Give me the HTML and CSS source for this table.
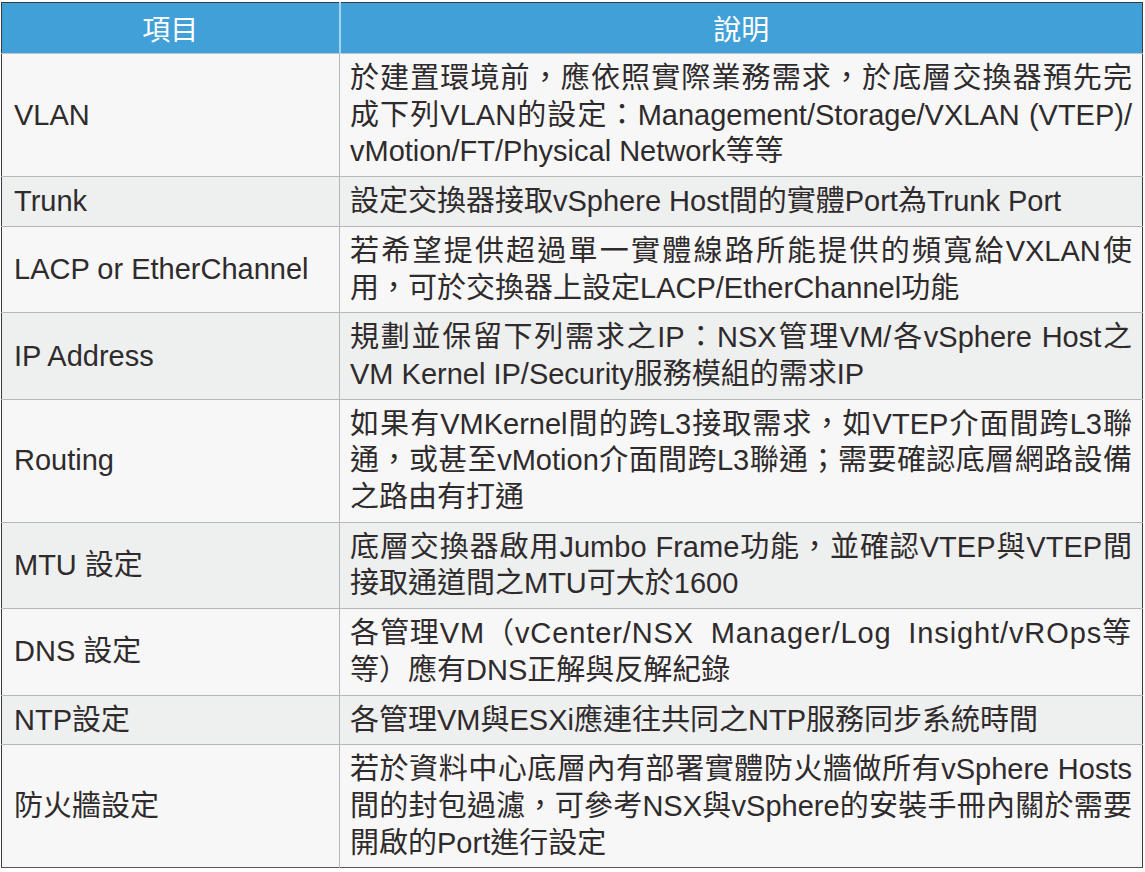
FILE: index.html
```html
<!DOCTYPE html>
<html lang="zh-Hant">
<head>
<meta charset="utf-8">
<title>項目說明</title>
<link rel="stylesheet" href="styles.css">
</head>
<body>
<table class="spec">
  <colgroup><col class="c1"><col class="c2"></colgroup>
  <thead>
    <tr><th>項目</th><th>說明</th></tr>
  </thead>
  <tbody>
    <tr class="odd">
      <td class="k">VLAN</td>
      <td class="v"><span class="ln j">於建置環境前，應依照實際業務需求，於底層交換器預先完</span><span class="ln j">成下列VLAN的設定：Management/Storage/VXLAN (VTEP)/</span><span class="ln">vMotion/FT/Physical Network等等</span></td>
    </tr>
    <tr class="even">
      <td class="k">Trunk</td>
      <td class="v"><span class="ln">設定交換器接取vSphere Host間的實體Port為Trunk Port</span></td>
    </tr>
    <tr class="odd">
      <td class="k">LACP or EtherChannel</td>
      <td class="v"><span class="ln j">若希望提供超過單一實體線路所能提供的頻寬給VXLAN使</span><span class="ln">用，可於交換器上設定LACP/EtherChannel功能</span></td>
    </tr>
    <tr class="even">
      <td class="k">IP Address</td>
      <td class="v"><span class="ln j">規劃並保留下列需求之IP：NSX管理VM/各vSphere Host之</span><span class="ln">VM Kernel IP/Security服務模組的需求IP</span></td>
    </tr>
    <tr class="odd">
      <td class="k">Routing</td>
      <td class="v"><span class="ln j">如果有VMKernel間的跨L3接取需求，如VTEP介面間跨L3聯</span><span class="ln j">通，或甚至vMotion介面間跨L3聯通；需要確認底層網路設備</span><span class="ln">之路由有打通</span></td>
    </tr>
    <tr class="even">
      <td class="k">MTU 設定</td>
      <td class="v"><span class="ln j">底層交換器啟用Jumbo Frame功能，並確認VTEP與VTEP間</span><span class="ln">接取通道間之MTU可大於1600</span></td>
    </tr>
    <tr class="odd">
      <td class="k">DNS 設定</td>
      <td class="v"><span class="ln sp wide"><span>各管理VM（vCenter/NSX</span><span>Manager/Log</span><span>Insight/vROps等</span></span><span class="ln">等）應有DNS正解與反解紀錄</span></td>
    </tr>
    <tr class="even">
      <td class="k">NTP設定</td>
      <td class="v"><span class="ln">各管理VM與ESXi應連往共同之NTP服務同步系統時間</span></td>
    </tr>
    <tr class="odd">
      <td class="k">防火牆設定</td>
      <td class="v"><span class="ln j">若於資料中心底層內有部署實體防火牆做所有vSphere Hosts</span><span class="ln j">間的封包過濾，可參考NSX與vSphere的安裝手冊內關於需要</span><span class="ln">開啟的Port進行設定</span></td>
    </tr>
  </tbody>
</table>
</body>
</html>
```

FILE: styles.css
```css
html, body {
  margin: 0;
  padding: 0;
  background: #ffffff;
}

body {
  padding: 2px 0 0 1px;
}

.spec {
  width: 1142px;
  border-collapse: collapse;
  table-layout: fixed;
  border: 1.5px solid #3a3a3a;
  border-bottom-color: #555;
  font-family: "Liberation Sans", "Noto Sans CJK TC", sans-serif;
  font-size: 29px;
  font-weight: 400;
  color: #2f2b2c;
}

.c1 { width: 338px; }

.spec th {
  background: #42a0d8;
  color: #ffffff;
  font-weight: 400;
  font-family: "Noto Sans CJK TC", sans-serif;
  font-size: 28px;
  height: 50px;
  padding: 0;
  text-align: center;
  vertical-align: middle;
  line-height: 36px;
  border-bottom: 1px solid #b9c3c9;
}

.spec th + th {
  border-left: 2px solid #a7d3ee;
}

.spec td {
  padding: 6px 10px 6px 12px;
  line-height: 36.7px;
  vertical-align: middle;
  border-top: 1px solid #b7b7b7;
}

.spec td.v {
  border-left: 1px solid #b7b7b7;
  padding-left: 10px;
  padding-right: 10px;
}

.spec tr.odd td { background: #f7f7f7; }
.spec tr.even td { background: #eeefef; }

.ln {
  display: block;
  white-space: nowrap;
}

.ln.j {
  text-align: justify;
  text-align-last: justify;
  white-space: normal;
}

.ln.sp {
  display: flex;
  justify-content: space-between;
}

.ln.wide {
  letter-spacing: 0.9px;
}
```
